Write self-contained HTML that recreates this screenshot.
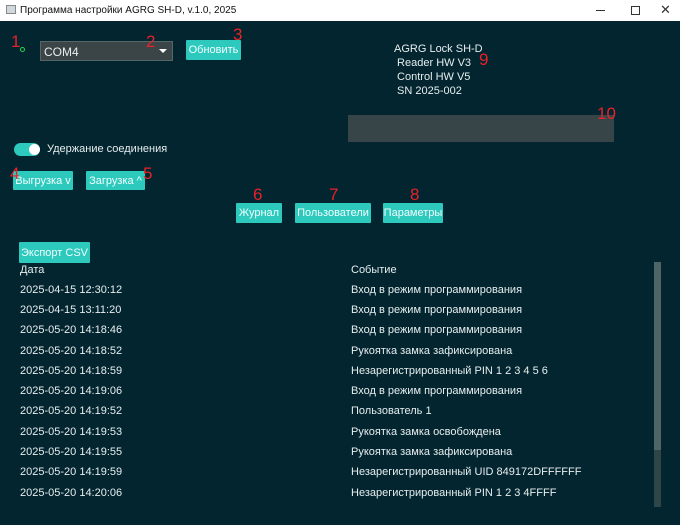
<!DOCTYPE html>
<html><head><meta charset="utf-8"><style>
*{margin:0;padding:0;box-sizing:border-box}
body{width:680px;height:525px;background:#022530;font-family:"Liberation Sans","DejaVu Sans",sans-serif;color:#e8eeee;position:relative;overflow:hidden;font-size:11px}
.a{position:absolute;white-space:nowrap}
.btn{position:absolute;background:#2ec9bd;color:#f2ffff;font-size:11px;display:flex;align-items:center;justify-content:center;border-radius:1px}
.red{position:absolute;color:#e8222a;font-size:17px;line-height:1}
.r{position:absolute;font-size:11px;color:#e8eeee}
</style></head><body>
<div class="a" style="left:0;top:0;width:680px;height:21px;background:#fff;color:#111;font-size:10px">
<div class="a" style="left:6px;top:5px;width:10px;height:9px;border:1px solid #888;background:#cfd8dc"></div>
<div class="a" style="left:20px;top:5px">Программа настройки AGRG SH-D, v.1.0, 2025</div>
<div class="a" style="left:596px;top:10px;width:9px;height:1px;background:#333"></div>
<div class="a" style="left:631px;top:6px;width:9px;height:9px;border:1px solid #333"></div>
<div class="a" style="left:660px;top:2px;font-size:13px;color:#333">✕</div>
</div>
<div class="red" style="left:11px;top:33px">1</div>
<div class="a" style="left:20px;top:47px;width:5px;height:5px;border:1.5px solid #2bd64a;border-radius:50%"></div>
<div class="a" style="left:40px;top:41px;width:133px;height:20px;background:#3b4446;border:1px solid #566;font-size:12px;padding:3px 0 0 3px">COM4</div>
<div class="a" style="left:159px;top:49px;width:0;height:0;border-left:4px solid transparent;border-right:4px solid transparent;border-top:4px solid #fff"></div>
<div class="red" style="left:146px;top:33px">2</div>
<div class="btn" style="left:186px;top:40px;width:55px;height:20px">Обновить</div>
<div class="red" style="left:233px;top:26px">3</div>
<div class="a" style="left:394px;top:42px;line-height:14px;font-size:11px">AGRG Lock SH-D<br>&nbsp;Reader HW V3<br>&nbsp;Control HW V5<br>&nbsp;SN 2025-002</div>
<div class="red" style="left:479px;top:51px">9</div>
<div class="a" style="left:348px;top:115px;width:266px;height:27px;background:#384548"></div>
<div class="red" style="left:597px;top:105px">10</div>
<div class="a" style="left:14px;top:143px;width:26px;height:13px;border-radius:7px;background:#2ec9bd"></div>
<div class="a" style="left:29px;top:144px;width:11px;height:11px;border-radius:50%;background:#fff"></div>
<div class="a" style="left:47px;top:143px;font-size:11px">Удержание соединения</div>
<div class="btn" style="left:13px;top:171px;width:60px;height:19px">Выгрузка v</div>
<div class="red" style="left:10px;top:165px">4</div>
<div class="btn" style="left:86px;top:171px;width:59px;height:19px">Загрузка ^</div>
<div class="red" style="left:143px;top:165px">5</div>
<div class="red" style="left:253px;top:186px">6</div>
<div class="red" style="left:329px;top:186px">7</div>
<div class="red" style="left:410px;top:186px">8</div>
<div class="btn" style="left:236px;top:203px;width:46px;height:20px">Журнал</div>
<div class="btn" style="left:295px;top:203px;width:76px;height:20px">Пользователи</div>
<div class="btn" style="left:383px;top:203px;width:60px;height:20px">Параметры</div>
<div class="btn" style="left:19px;top:242px;width:71px;height:21px">Экспорт CSV</div>
<div class="a" style="left:654px;top:262px;width:7px;height:245px;background:#2f4648"></div>
<div class="a" style="left:654px;top:262px;width:7px;height:188px;background:#4e6466"></div>
<div class="r" style="left:20px;top:264px">Дата</div><div class="r" style="left:351px;top:264px">Событие</div>
<div class="r" style="left:20px;top:284px">2025-04-15 12:30:12</div><div class="r" style="left:351px;top:284px">Вход в режим программирования</div>
<div class="r" style="left:20px;top:304px">2025-04-15 13:11:20</div><div class="r" style="left:351px;top:304px">Вход в режим программирования</div>
<div class="r" style="left:20px;top:324px">2025-05-20 14:18:46</div><div class="r" style="left:351px;top:324px">Вход в режим программирования</div>
<div class="r" style="left:20px;top:345px">2025-05-20 14:18:52</div><div class="r" style="left:351px;top:345px">Рукоятка замка зафиксирована</div>
<div class="r" style="left:20px;top:365px">2025-05-20 14:18:59</div><div class="r" style="left:351px;top:365px">Незарегистрированный PIN 1 2 3 4 5 6</div>
<div class="r" style="left:20px;top:385px">2025-05-20 14:19:06</div><div class="r" style="left:351px;top:385px">Вход в режим программирования</div>
<div class="r" style="left:20px;top:405px">2025-05-20 14:19:52</div><div class="r" style="left:351px;top:405px">Пользователь 1</div>
<div class="r" style="left:20px;top:426px">2025-05-20 14:19:53</div><div class="r" style="left:351px;top:426px">Рукоятка замка освобождена</div>
<div class="r" style="left:20px;top:446px">2025-05-20 14:19:55</div><div class="r" style="left:351px;top:446px">Рукоятка замка зафиксирована</div>
<div class="r" style="left:20px;top:466px">2025-05-20 14:19:59</div><div class="r" style="left:351px;top:466px">Незарегистрированный UID 849172DFFFFFF</div>
<div class="r" style="left:20px;top:487px">2025-05-20 14:20:06</div><div class="r" style="left:351px;top:487px">Незарегистрированный PIN 1 2 3 4FFFF</div>
</body></html>
